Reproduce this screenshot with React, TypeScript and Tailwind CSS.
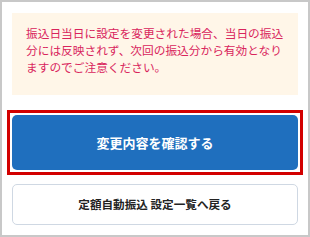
export default function App() {
  return (
    <div
      className="w-[310px] h-[237px] bg-white border-2 border-[#c8c8c8] box-border overflow-hidden"
      style={{ fontFamily: '"Noto Sans CJK JP", "Noto Sans", sans-serif' }}
    >
      <div className="flex flex-col px-[10px] pt-[11px]">
        <div className="bg-[#fff6e8] h-[82px] pl-[14px] pr-[12px] pt-[11px] text-[11.7px] leading-[17px] text-[#d9245c]">
          振込日当日に設定を変更された場合、当日の振込分には反映されず、次回の振込分から有効となりますのでご注意ください。
        </div>
        <div className="mt-[15px] -mx-[5px] border-[3px] border-[#d20000] p-[2px]">
          <button className="w-full h-[55px] rounded-[5px] bg-[#1f6fbe] text-white font-bold text-[13px] flex items-center justify-center">
            変更内容を確認する
          </button>
        </div>
        <button className="mt-[9px] w-full h-[41px] rounded-[5px] border border-[#cfd8e3] bg-white text-[#222] font-bold text-[11.6px] flex items-center justify-center">
          定額自動振込 設定一覧へ戻る
        </button>
      </div>
    </div>
  );
}
